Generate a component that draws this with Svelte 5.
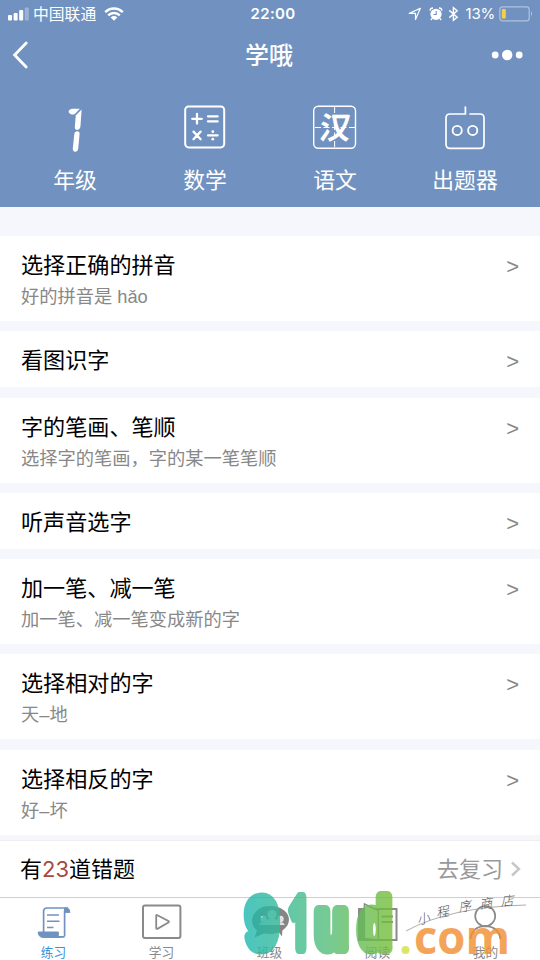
<script>
  const subjects = [
    { id: 'grade', label: '年级' },
    { id: 'math', label: '数学' },
    { id: 'chinese', label: '语文' },
    { id: 'maker', label: '出题器' }
  ];

  const exercises = [
    { title: '选择正确的拼音', hint: '好的拼音是 hǎo' },
    { title: '看图识字' },
    { title: '字的笔画、笔顺', hint: '选择字的笔画，字的某一笔笔顺' },
    { title: '听声音选字' },
    { title: '加一笔、减一笔', hint: '加一笔、减一笔变成新的字' },
    { title: '选择相对的字', hint: '天–地' },
    { title: '选择相反的字', hint: '好–坏' }
  ];

  const wrongCount = 23;

  const tabs = [
    { id: 'practice', label: '练习' },
    { id: 'study', label: '学习' },
    { id: 'class', label: '班级' },
    { id: 'read', label: '阅读' },
    { id: 'me', label: '我的' }
  ];
  let active = 'practice';
</script>

<div class="screen">
  <header class="header">
    <div class="status">
      <div class="status-left">
        <svg width="22" height="14" viewBox="0 0 22 14" fill="#fff">
          <rect x="0" y="8" width="4" height="5.5" rx="1" />
          <rect x="5.6" y="6" width="4" height="7.5" rx="1" />
          <rect x="11.2" y="3" width="4" height="10.5" rx="1" />
          <rect x="16.8" y="0.5" width="4" height="13" rx="1" opacity="0.3" />
        </svg>
        <span class="carrier">中国联通</span>
        <svg class="wifi" width="20" height="14" viewBox="0 0 20 14" fill="none" stroke="#fff" stroke-width="2.4">
          <path d="M1.2 5.2C6.2 .2 13.8 .2 18.8 5.2" />
          <path d="M4.2 8.4C7.5 5.2 12.5 5.2 15.8 8.4" />
          <path d="M6.7 10.4C8.6 8.6 11.4 8.6 13.3 10.4L10 13.7Z" fill="#fff" stroke="none" />
        </svg>
      </div>
      <span class="clock">22:00</span>
      <div class="status-right">
        <svg width="14" height="14" viewBox="0 0 14 14" fill="none" stroke="#fff" stroke-width="1.2">
          <path d="M1.3 6.4L12.4 1.3L7.5 12.4V6.4Z" stroke-linejoin="round" />
        </svg>
        <svg class="alarm" width="14" height="14" viewBox="0 0 14 14">
          <circle cx="7" cy="7.3" r="5.6" fill="#fff" />
          <path d="M1 3.6A3 3 0 0 1 4 1M10 1A3 3 0 0 1 13 3.6M3 11.5L1.8 13M11 11.5L12.2 13" stroke="#fff" stroke-width="1.3" fill="none" />
          <path d="M7.2 4V7.5H4.4" stroke="#7192c0" stroke-width="1.1" fill="none" />
        </svg>
        <svg class="bluetooth" width="11" height="16" viewBox="0 0 11 16" fill="none" stroke="#fff" stroke-width="1.4">
          <path d="M1.3 4.4L9.2 11.3L5.4 14.4V1.6L9.2 4.7L1.3 11.6" />
        </svg>
        <span class="percent">13%</span>
        <svg class="battery" width="35" height="16" viewBox="0 0 35 16">
          <rect x="0.8" y="0.8" width="29.4" height="14" rx="2.6" fill="none" stroke="#fff" stroke-opacity=".45" stroke-width="1.2" />
          <rect x="2.8" y="3" width="4" height="9.6" rx=".8" fill="#f6cd46" />
          <path d="M32 5.3Q34 7.8 32 10.3Z" fill="#fff" opacity=".5" />
        </svg>
      </div>
    </div>

    <div class="navbar">
      <svg width="18" height="28" viewBox="0 0 18 28" fill="none" stroke="#fff" stroke-width="2.8">
        <path d="M14.2 2L2.6 14L14.2 26" stroke-linecap="round" />
      </svg>
      <h1>学哦</h1>
      <svg width="34" height="12" viewBox="0 0 34 12" fill="#fff">
        <circle cx="5.2" cy="6" r="3.4" />
        <circle cx="17.2" cy="6" r="5.2" />
        <circle cx="29.2" cy="6" r="3.4" />
      </svg>
    </div>

    <nav class="subjects">
      {#each subjects as s}
        <div class="subject">
          <svg width="46" height="46" viewBox="0 0 46 46" fill="none" stroke="#fff" stroke-width="2">
            {#if s.id === 'grade'}
              <!-- lit segments of a digital counter -->
              <g stroke="none" fill="#fff">
                <path d="M16.6 7Q17.6 5 20 4.8H27.8L23.4 9.6Q21.5 11.2 18.4 9.9Q16.4 9 16.6 7Z" />
                <path d="M29.6 5.6L28.4 23Q27.6 26.2 25.2 26Q22.6 25.6 22.8 23L23.8 11.6Z" />
                <path d="M25.2 27.2Q27.8 27.4 27.6 30L26.2 44.6Q25.6 47.8 23.2 47.8Q20.6 47.6 20.8 44.6L22.3 30Q22.8 27.2 25.2 27.2Z" />
              </g>
            {:else if s.id === 'math'}
              <rect x="3.2" y="2.4" width="39" height="41" rx="3.4" />
              <g stroke-width="2.3" stroke-linecap="round">
                <path d="M10.2 14.8H19.8M15 10V19.6M26 12.4H35.6M26 17.4H35.6" />
                <path d="M11.5 27.6L18.6 35.2M18.6 27.6L11.5 35.2M26 31.4H35.6" />
              </g>
              <g stroke="none" fill="#fff">
                <circle cx="30.8" cy="27.7" r="1.4" />
                <circle cx="30.8" cy="35.2" r="1.4" />
              </g>
            {:else if s.id === 'chinese'}
              <rect x="1.7" y="2.3" width="41.8" height="42" rx="4.5" stroke-width="1.4" />
              <path d="M22.6 3V44.5M3 23.5H43.5" stroke-width="1" stroke-dasharray="6 2.5" />
              <text class="hanzi" x="22.6" y="34.5" text-anchor="middle" transform="skewX(-6) translate(3 0)">汉</text>
            {:else}
              <path d="M23.4 3V10H8Q4 10 4 14V40Q4 44.4 8 44.4H38Q42 44.4 42 40V14Q42 10 38 10H28" stroke-width="1.7" stroke-linecap="round" />
              <circle cx="15.2" cy="26.4" r="4.6" stroke-width="1.8" />
              <circle cx="30.7" cy="26.4" r="4.6" stroke-width="1.8" />
            {/if}
          </svg>
          <span>{s.label}</span>
        </div>
      {/each}
    </nav>
  </header>

  <main class="list">
    {#each exercises as e}
      <section class="item">
        <div class="item-head">
          <h2>{e.title}</h2>
          <span class="arrow">&gt;</span>
        </div>
        {#if e.hint}
          <p class="hint">{e.hint}</p>
        {/if}
      </section>
    {/each}
  </main>

  <section class="review">
    <p>有<span class="count">{wrongCount}</span>道错题</p>
    <div class="review-link">
      <span>去复习</span>
      <svg width="12" height="16" viewBox="0 0 12 16" fill="none" stroke="#c6c6cb" stroke-width="2.4">
        <path d="M2 1.5L9 8L2 14.5" />
      </svg>
    </div>
  </section>

  <footer class="tabbar">
    {#each tabs as t}
      <div class="tab" class:active={active === t.id}>
        <svg width="42" height="38" viewBox="0 0 42 38" fill="none" stroke="#8a8a8a" stroke-width="2">
          {#if t.id === 'practice'}
            <g stroke="#7192c0">
              <path d="M31.5 31.8H11M31.6 31.5V6Q31.6 3.2 35 3H14Q10.8 3 10.6 6V27" stroke-width="1.7" />
              <path d="M14 10H26M14 16.2H26.5M14 22.4H20.5" stroke-width="1.5" />
              <path d="M31.8 3H34.2Q36.8 3.6 36.8 7.4H31.8Z" fill="#7192c0" stroke-width="1" />
              <path d="M5.2 27H25.3V30.5Q25.6 32 27.5 32.4H9.5Q5.2 31.8 5.2 27Z" fill="#7192c0" stroke-width="1" />
            </g>
          {:else if t.id === 'study'}
            <rect x="2" y="0.6" width="37.4" height="32.4" rx="2" />
            <path d="M15.2 10.8Q15.2 9.6 16.4 10.2L27.4 15.9Q28.4 16.8 27.4 17.6L16.4 23.8Q15.2 24.2 15.2 23Z" stroke-width="1.8" />
          {:else if t.id === 'class'}
            <g stroke="none" fill="#858585">
              <path d="M20.5 1C10 1 3 8.5 3 16Q3.3 21.5 8 25.5L5.5 32.5L15 28.5C30 31 40 23 40 14.5C40 7 32 1 20.5 1Z" />
              <path d="M29 26L33 31.5L33.5 23Z" />
              <g fill="#e2e2e2">
                <circle cx="23" cy="9.5" r="4.6" />
                <circle cx="14.5" cy="14" r="3.2" />
                <circle cx="31.5" cy="14" r="3.2" />
                <path d="M10 20Q11 16.4 15.5 17.2Q18 13.6 23 13.6Q28 13.6 30 17.2Q34 16.4 36 20Z" />
              </g>
            </g>
          {:else if t.id === 'read'}
            <path d="M2 4H39.5V35H2Z" />
            <path d="M2 4H8V35H2Z" fill="#8a8a8a" stroke="none" />
            <path d="M7.4 -1L21.3 5.5V35L7.4 33.5Z" fill="#fff" stroke-width="1.4" />
            <path d="M24.5 11.4H36M24.5 17H36" />
          {:else}
            <circle cx="20.2" cy="11" r="10" stroke-width="1.7" />
            <path d="M5.4 34Q7.4 21.5 20.2 21.2Q33.2 21.5 35.6 34" stroke-width="1.7" />
          {/if}
        </svg>
        <span>{t.label}</span>
      </div>
    {/each}
  </footer>

  <!-- store watermark, floats over the tab bar -->
  <svg class="watermark" width="300" height="75" viewBox="0 0 300 75">
    <defs>
      <linearGradient id="brand" gradientUnits="userSpaceOnUse" x1="3" y1="0" x2="155" y2="0">
        <stop offset="0" stop-color="#1db7b0" />
        <stop offset="0.5" stop-color="#50bd80" />
        <stop offset="1" stop-color="#78be35" />
      </linearGradient>
    </defs>
    <g class="brand" fill="url(#brand)" stroke="url(#brand)" opacity=".8">
      <text x="6.5" y="63" textLength="31" lengthAdjust="spacingAndGlyphs">9</text>
      <text class="one" x="49" y="63" textLength="20" lengthAdjust="spacingAndGlyphs">1</text>
      <text x="75" y="63" textLength="33" lengthAdjust="spacingAndGlyphs">u</text>
      <text x="118.5" y="63" textLength="33" lengthAdjust="spacingAndGlyphs">d</text>
    </g>
    <circle cx="165.5" cy="65" r="4" fill="#dbe56c" />
    <text class="com" x="174" y="68.5" textLength="96" lengthAdjust="spacingAndGlyphs">com</text>
    <path d="M166 46Q210 22 286 20" fill="none" stroke="#999" stroke-width=".8" />
    <g class="store">
      <text transform="translate(178 40) rotate(-14)">小</text>
      <text transform="translate(197 33) rotate(-12)">程</text>
      <text transform="translate(219 27) rotate(-9)">序</text>
      <text transform="translate(240 24) rotate(-7)">商</text>
      <text transform="translate(261 21) rotate(-5)">店</text>
    </g>
  </svg>
</div>

<style>
  :global(body) {
    background: #f6f7fd;
  }

  .screen {
    position: relative;
    width: 540px;
    height: 960px;
    overflow: hidden;
    display: flex;
    flex-direction: column;
    background: #f6f7fd;
    font-family: Inter, 'Noto Sans CJK SC', sans-serif;
    color: #000;
  }

  h1,
  h2,
  p {
    margin: 0;
    font-weight: 400;
  }

  svg {
    overflow: visible;
  }

  .header {
    height: 207px;
    flex: none;
    box-sizing: border-box;
    background: #7192c0;
    color: #fff;
  }

  .status {
    height: 27px;
    padding: 0 6px 0 8px;
    display: grid;
    grid-template-columns: 1fr auto 1fr;
    align-items: center;
    font-size: 15.5px;
    line-height: 27px;
  }

  .status-left,
  .status-right {
    display: flex;
    align-items: center;
  }

  .carrier {
    margin: 0 8px 0 3px;
    font-family: 'Noto Sans CJK SC', sans-serif;
    font-size: 15.8px;
  }

  .clock {
    padding-left: 4px;
    font-size: 15px;
    font-weight: 600;
    letter-spacing: 0.3px;
  }

  .status-right {
    justify-content: flex-end;
  }

  .alarm {
    margin-left: 7px;
  }

  .bluetooth {
    margin: 0 7px 0 5px;
  }

  .percent {
    font-size: 15px;
    letter-spacing: -0.2px;
  }

  .battery {
    margin-left: 4px;
  }

  .navbar {
    height: 56px;
    padding: 0 16px 0 12px;
    display: grid;
    grid-template-columns: 1fr auto 1fr;
    align-items: center;
  }

  .navbar h1 {
    padding: 2px 0 0 2px;
    font-size: 24px;
    line-height: 32px;
    font-weight: 500;
  }

  .navbar svg:last-child {
    justify-self: end;
  }

  .subjects {
    display: flex;
    padding: 21px 10px 0;
  }

  .subject {
    flex: 1;
    display: flex;
    flex-direction: column;
    align-items: center;
    font-size: 21.8px;
    line-height: 32px;
  }

  .subject span {
    margin-top: 14px;
  }

  .hanzi {
    font-family: 'Noto Sans CJK SC', sans-serif;
    font-size: 31px;
    font-weight: 700;
    fill: #fff;
    stroke: none;
  }

  .list {
    margin-top: 29px;
    display: flex;
    flex-direction: column;
    gap: 10.3px;
  }

  .item {
    padding: 14px 21px 12px;
    background: #fff;
  }

  .item-head {
    display: flex;
    justify-content: space-between;
    height: 30px;
    line-height: 30px;
  }

  .item h2 {
    font-size: 22.1px;
    line-height: 30px;
  }

  .arrow {
    font-family: 'Liberation Sans', sans-serif;
    font-size: 22px;
    line-height: 33px;
    color: #888;
  }

  .hint {
    margin-top: 4px;
    font-family: 'Liberation Sans', 'Noto Sans CJK SC', sans-serif;
    font-size: 18.25px;
    line-height: 25px;
    color: #888;
  }

  .review {
    margin-top: auto;
    height: 56px;
    flex: none;
    padding: 0 18px 0 20px;
    display: flex;
    align-items: center;
    justify-content: space-between;
    background: #fff;
    border-top: 1px solid #eee;
    font-size: 22px;
    line-height: 32px;
  }

  .count {
    color: #a34a44;
  }

  .review-link {
    display: flex;
    align-items: center;
    gap: 7px;
    color: #999;
  }

  .tabbar {
    height: 62px;
    flex: none;
    display: flex;
    background: #fff;
    border-top: 1px solid #cfcfcf;
  }

  .tab {
    flex: 1;
    padding-top: 7px;
    display: flex;
    flex-direction: column;
    align-items: center;
    font-size: 12.7px;
    line-height: 16px;
    color: #888;
  }

  .tab span {
    margin: 1px 1px 0 0;
    padding-top: 1px;
  }

  .tab.active {
    color: #3d93dc;
  }

  .watermark {
    position: absolute;
    left: 240px;
    top: 885px;
  }

  .brand {
    font-family: 'Liberation Sans', sans-serif;
    font-size: 70px;
    font-weight: 700;
    stroke-width: 12px;
    stroke-linejoin: round;
  }

  .one {
    font-family: 'Open Sans', sans-serif;
  }

  .com {
    font-family: 'Open Sans', sans-serif;
    font-size: 47px;
    font-weight: 700;
    fill: #f29135;
    opacity: 0.82;
  }

  .store {
    font-family: 'Noto Sans CJK SC', sans-serif;
    font-size: 13px;
    font-style: italic;
    font-weight: 300;
    fill: #555;
  }
</style>
